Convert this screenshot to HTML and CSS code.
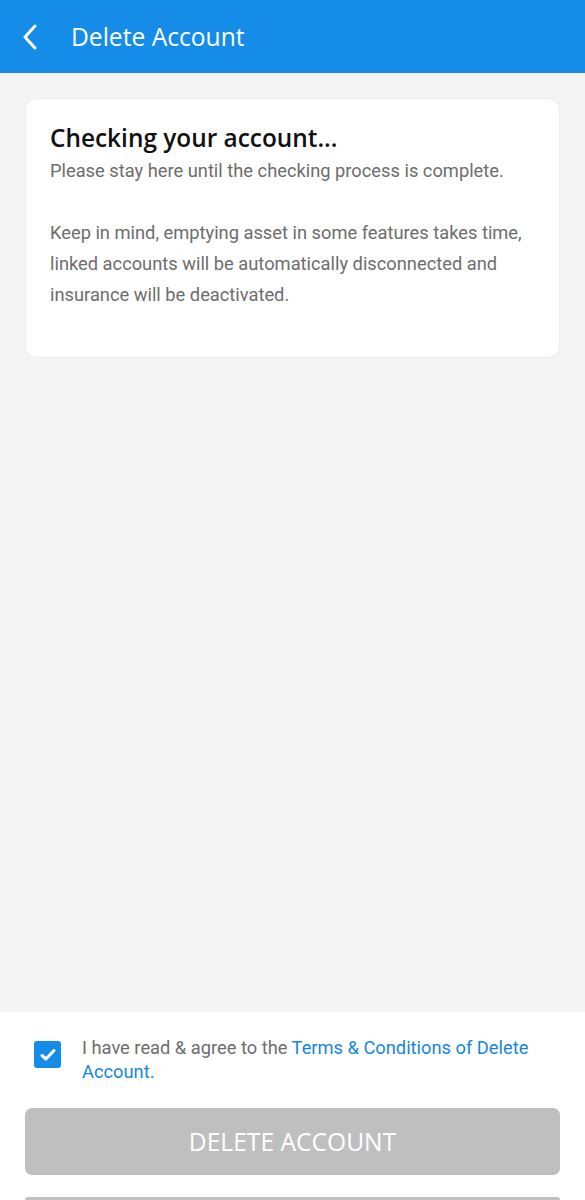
FILE: index.html
```html
<!DOCTYPE html>
<html lang="en">
<head>
    <meta charset="UTF-8">
    <meta name="viewport" content="width=device-width, initial-scale=1.0">
    <title>Delete Account</title>
    <link rel="stylesheet" href="styles.css">
</head>
<body>
    <div class="screen">
        <!-- HEADER -->
        <header class="app-bar">
            <span class="back">
                <svg width="16" height="26" viewBox="0 0 16 26">
                    <path d="M13 2 L3 13 L13 24" fill="none" stroke="#fff" stroke-width="3" stroke-linecap="round" stroke-linejoin="round"/>
                </svg>
            </span>
            <h1>Delete Account</h1>
        </header>

        <!-- CONTENT -->
        <main class="content">
            <div class="card">
                <h2>Checking your account...</h2>
                <p class="sub">Please stay here until the checking process is complete.</p>
                <p class="note">Keep in mind, emptying asset in some features takes time, linked accounts will be automatically disconnected and insurance will be deactivated.</p>
            </div>
        </main>

        <!-- FOOTER -->
        <footer class="bottom">
            <label class="agree">
                <span class="check">
                    <svg width="18" height="18" viewBox="0 0 18 18">
                        <path d="M3 9.5 L7 13 L15 4.5" fill="none" stroke="#fff" stroke-width="3" stroke-linecap="round" stroke-linejoin="round"/>
                    </svg>
                </span>
                <span class="agree-text">I have read &amp; agree to the <a href="#">Terms &amp; Conditions of Delete Account.</a></span>
            </label>
            <button class="btn-delete" disabled>DELETE ACCOUNT</button>
            <div class="btn-next"></div>
        </footer>
    </div>
</body>
</html>
```

FILE: styles.css
```css
* {
    box-sizing: border-box;
}

body {
    margin: 0;
    background-color: #f4f4f4;
    font-family: Roboto, "Liberation Sans", sans-serif;
}

.screen {
    display: flex;
    flex-direction: column;
    height: 1200px;
    overflow: hidden;
}

.app-bar {
    display: flex;
    align-items: center;
    height: 73px;
    padding-left: 22px;
    background-color: #158de8;
    color: #fff;
}

.back {
    display: flex;
    width: 49px;
}

.app-bar h1 {
    margin: 0;
    font-family: "Open Sans", sans-serif;
    font-size: 24.6px;
    font-weight: 400;
}

.content {
    flex: 1;
    padding: 25px 25px 0;
}

.card {
    background-color: #fff;
    border: 1px solid #ececec;
    border-radius: 12px;
    padding: 22px 24px 47px;
}

.card h2 {
    margin: 0;
    font-family: "Open Sans", sans-serif;
    font-size: 24.4px;
    font-weight: 600;
    color: #111;
    line-height: 34px;
}

.sub {
    margin: 0;
    font-size: 18.3px;
    line-height: 32px;
    color: #6d6d6d;
}

.note {
    margin: 30px 0 0;
    font-size: 18.3px;
    line-height: 31px;
    color: #6d6d6d;
}

.bottom {
    background-color: #fff;
    padding: 24px 25px 0;
}

.agree {
    display: flex;
    align-items: flex-start;
    padding-left: 9px;
}

.check {
    display: flex;
    align-items: center;
    justify-content: center;
    flex-shrink: 0;
    width: 27px;
    height: 27px;
    margin-top: 5px;
    margin-right: 21px;
    border-radius: 3px;
    background-color: #158de8;
}

.agree-text {
    font-size: 18.3px;
    line-height: 24px;
    color: #6d6d6d;
}

.agree-text a {
    color: #1686dc;
    text-decoration: none;
}

.btn-delete {
    display: block;
    width: 100%;
    height: 67px;
    margin-top: 24px;
    border: none;
    border-radius: 7px;
    background-color: #bfbfbf;
    color: #fff;
    font-family: "Open Sans", sans-serif;
    font-size: 24.6px;
    font-weight: 500;
}

.btn-next {
    height: 3px;
    margin-top: 22px;
    border-radius: 7px 7px 0 0;
    background-color: #bfbfbf;
}
```
